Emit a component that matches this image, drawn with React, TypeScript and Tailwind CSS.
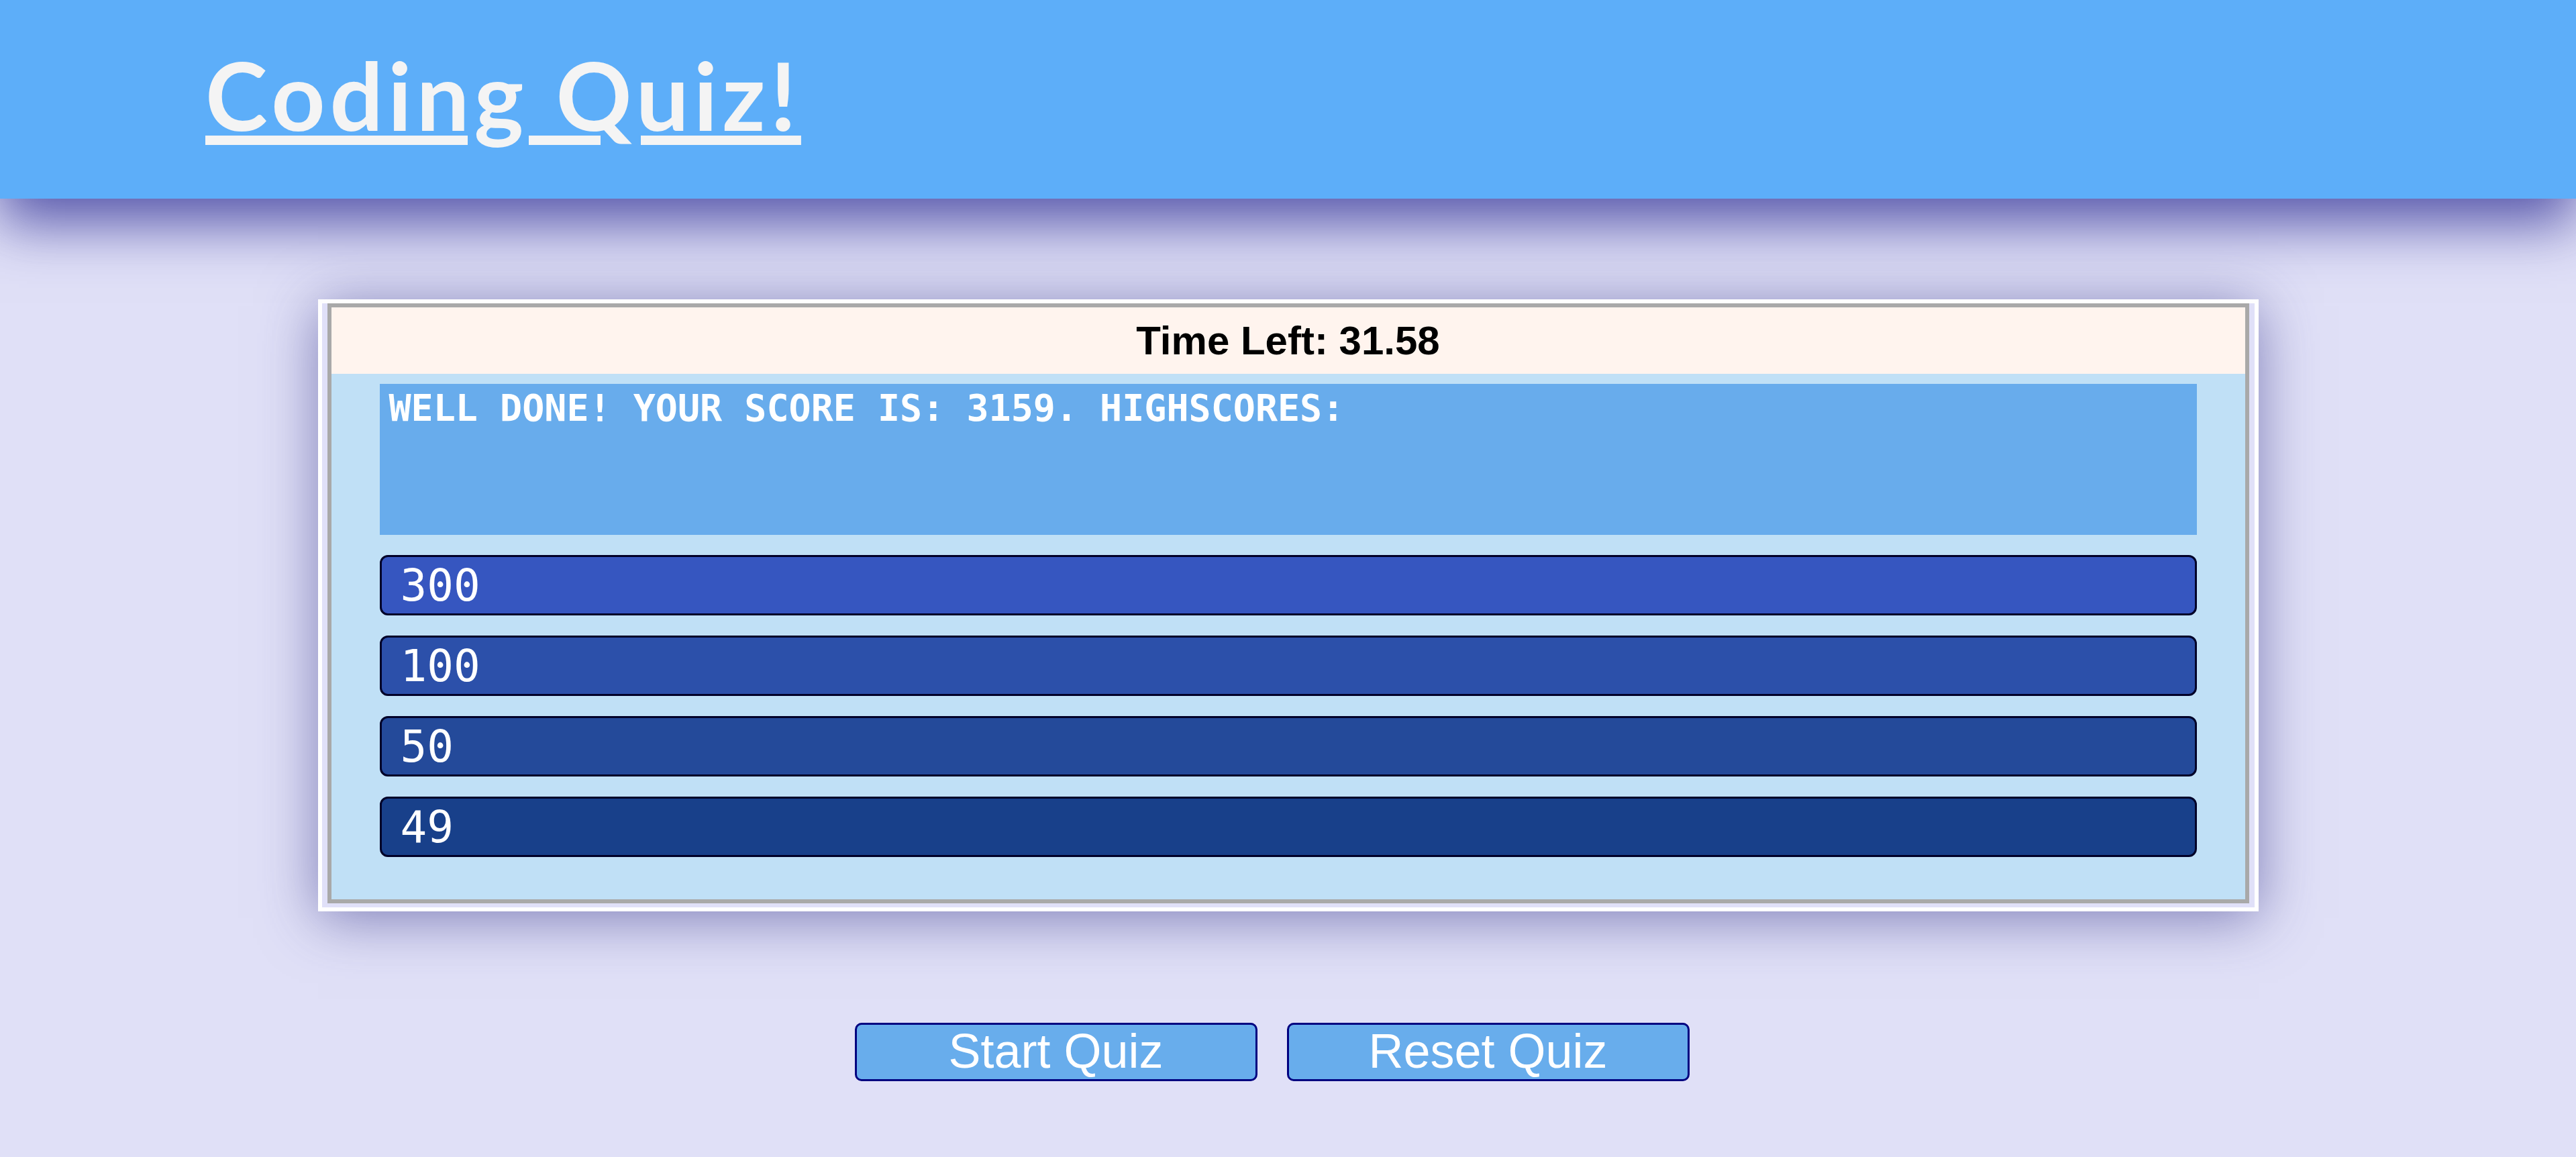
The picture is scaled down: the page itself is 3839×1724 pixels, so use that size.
import React from "react";

const scores = [
  { v: "300", c: "bg-[#3656c0]" },
  { v: "100", c: "bg-[#2c50aa]" },
  { v: "50", c: "bg-[#244a9a]" },
  { v: "49", c: "bg-[#18408a]" },
];

export default function App() {
  return (
    <div className="min-h-screen w-full bg-[#e0e0f7]">
      <header className="relative z-10 h-[296px] bg-[#5daef9] pl-[306px] pt-[36px] shadow-[0_36px_80px_rgba(50,50,150,0.8)]">
        <h1 className="font-['Lato',sans-serif] text-[140px] font-bold leading-normal tracking-[7px] text-[#f4f4f4] underline decoration-[14px] underline-offset-[7px]">
          Coding Quiz!
        </h1>
      </header>

      <div className="mx-auto mt-[150px] w-[2892px] border-[6px] border-white bg-[#e0e0f8] px-[8px] pb-[6px] shadow-[0_10px_80px_rgba(60,60,140,0.6)]">
        <div className="border-[6px] border-[#a9a9a9]">
          <div className="flex h-[99px] items-center justify-center bg-[#fff4ee] font-['Liberation_Sans',Arial,sans-serif] text-[60px] font-bold text-black">
            Time Left: 31.58
          </div>
          <div className="bg-[#c0e0f6] px-[72px] pb-[63px] pt-[15px]">
            <div className="h-[225px] bg-[#68acec] pl-[14px] pt-[9px] font-['DejaVu_Sans_Mono',monospace] text-[55px] font-bold leading-none text-white">
              WELL DONE! YOUR SCORE IS: 3159. HIGHSCORES:
            </div>
            {scores.map((s) => (
              <div
                key={s.v}
                className={`mt-[30px] flex h-[90px] items-center rounded-[12px] border-[3px] border-[#000028] pl-[28px] font-['DejaVu_Sans_Mono',monospace] text-[66px] text-white ${s.c}`}
              >
                {s.v}
              </div>
            ))}
          </div>
        </div>
      </div>

      <div className="mt-[166px] flex justify-center gap-[44px] pr-[48px]">
        <button className="flex h-[87px] w-[600px] items-center justify-center rounded-[10px] border-[3px] border-[#000080] bg-[#68adec] pb-[3px] font-['Liberation_Sans',Arial,sans-serif] text-[72px] text-white">
          Start Quiz
        </button>
        <button className="flex h-[87px] w-[600px] items-center justify-center rounded-[10px] border-[3px] border-[#000080] bg-[#68adec] pb-[3px] font-['Liberation_Sans',Arial,sans-serif] text-[72px] text-white">
          Reset Quiz
        </button>
      </div>
    </div>
  );
}
